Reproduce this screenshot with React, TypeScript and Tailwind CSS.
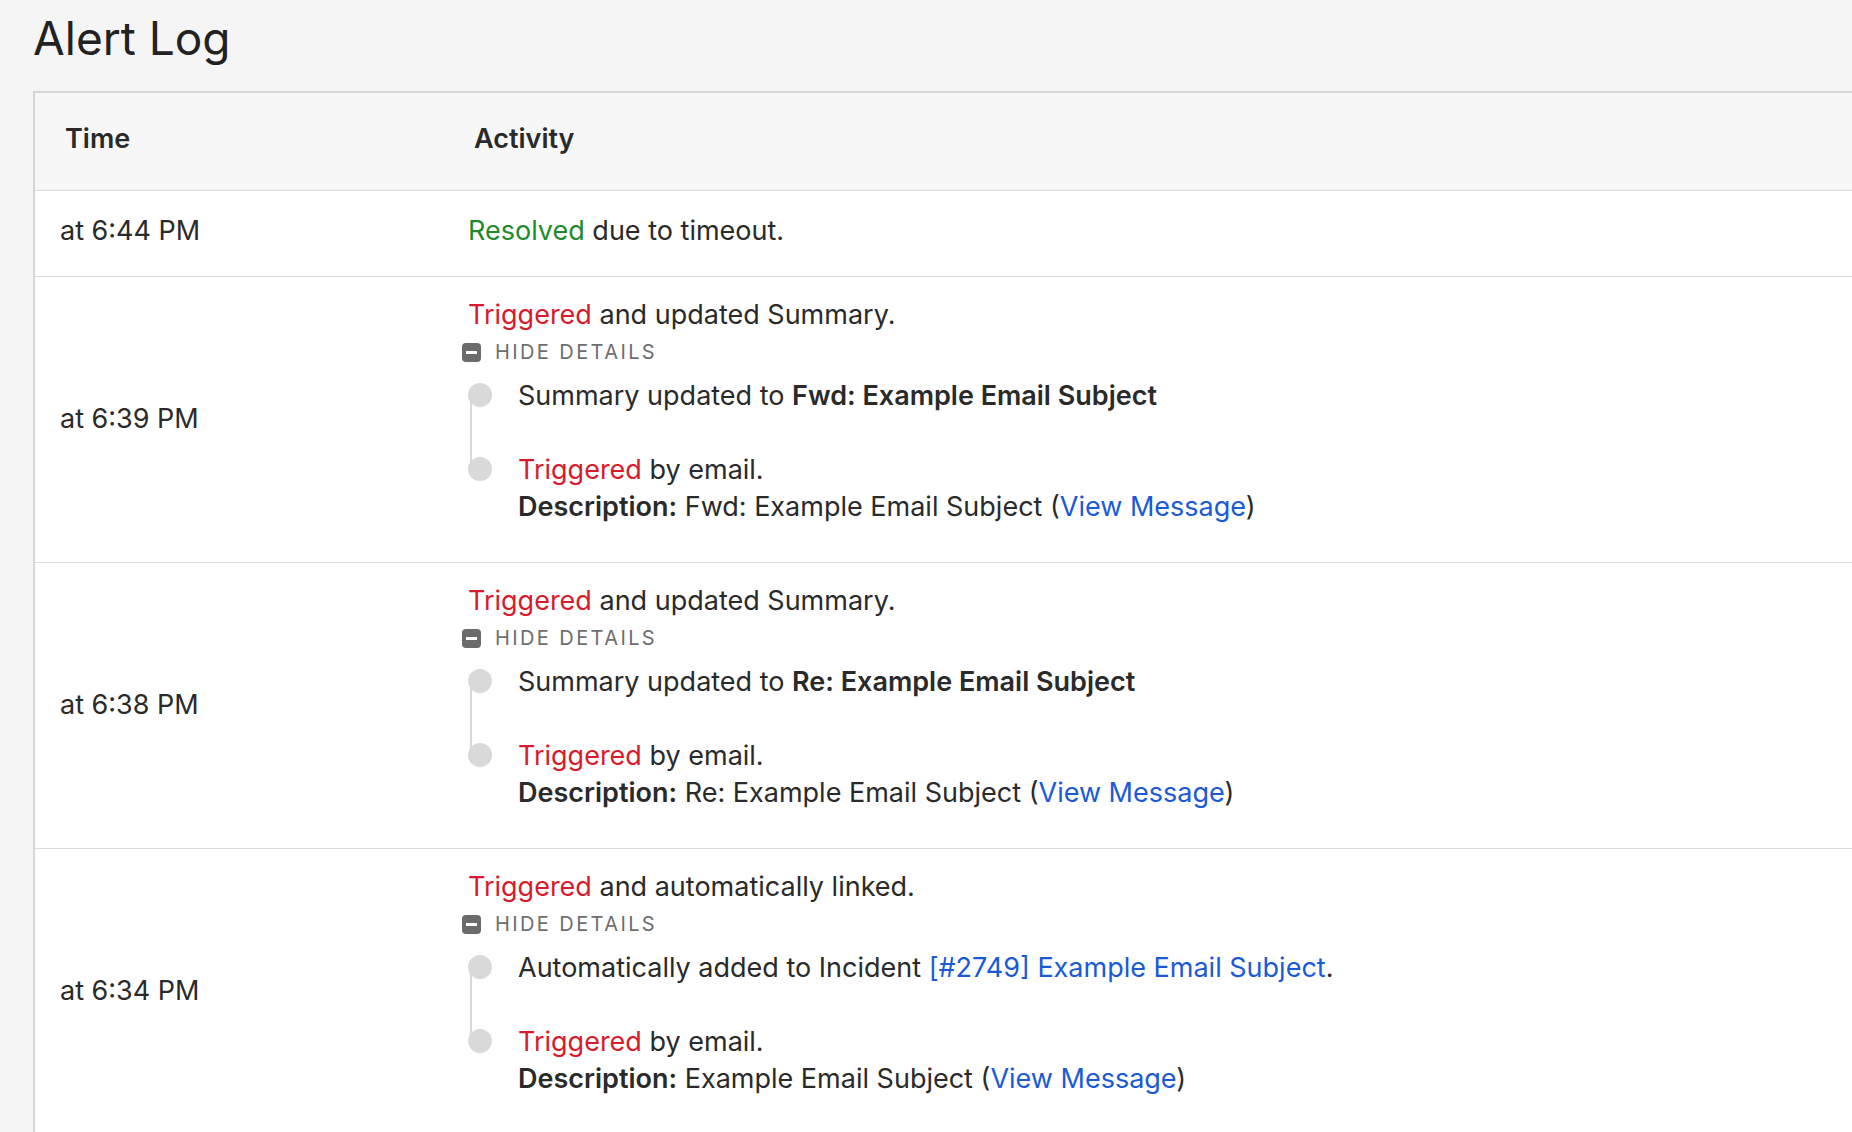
import React from 'react';

const red = 'text-[#d71b2c]';
const blue = 'text-[#1a5ad7]';

function HideDetails() {
  return (
    <div className="flex items-center h-[38px] -ml-[6px] gap-[14px]">
      <span className="w-[19px] h-[19px] rounded-[4px] bg-[#6b6b6b] flex items-center justify-center">
        <span className="w-[11px] h-[3px] bg-white" />
      </span>
      <span className="text-[20px] tracking-[0.12em] text-[#6e6e6e]">HIDE DETAILS</span>
    </div>
  );
}

function Timeline({ first, second }: { first: React.ReactNode; second: React.ReactNode }) {
  return (
    <div className="relative mt-[6px] pl-[50px]">
      <div className="absolute left-[1px] top-[18px] w-[2px] h-[76px] bg-[#d9d9d9] ml-[1px]" />
      <div className="relative leading-[37px]">
        <span className="absolute -left-[50px] top-[6px] w-[24px] h-[24px] rounded-full bg-[#d9d9d9]" />
        {first}
      </div>
      <div className="relative leading-[37px] mt-[37px]">
        <span className="absolute -left-[50px] top-[6px] w-[24px] h-[24px] rounded-full bg-[#d9d9d9]" />
        {second}
      </div>
    </div>
  );
}

function DetailRow({ time, head, first, desc }: { time: string; head: React.ReactNode; first: React.ReactNode; desc: string }) {
  return (
    <div className="flex border-t border-[#dcdcdc] h-[286px]">
      <div className="w-[439px] pl-[25px] flex items-center">{time}</div>
      <div className="flex-1 pt-[20px] -ml-[6px]">
        <div className="leading-[36px]">{head}</div>
        <HideDetails />
        <Timeline
          first={first}
          second={
            <>
              <div><span className={red}>Triggered</span> by email.</div>
              <div>
                <b className="font-semibold">Description:</b> {desc} (<span className={blue}>View Message</span>)
              </div>
            </>
          }
        />
      </div>
    </div>
  );
}

export default function App() {
  return (
    <div className="min-h-[1132px] bg-[#f5f5f5] text-[#2a2a2a] text-[27px] overflow-hidden" style={{ fontFamily: 'Inter, "Noto Sans", sans-serif' }}>
      <h1 className="pl-[33px] pt-[8px] h-[91px] text-[46px] leading-[60px] text-[#222]">Alert Log</h1>
      <div className="ml-[33px] border-l-2 border-t-2 border-[#d6d6d6] bg-white">
        <div className="flex h-[97px] items-center bg-[#f7f7f7] font-semibold pb-[4px]">
          <div className="w-[439px] pl-[30px]">Time</div>
          <div>Activity</div>
        </div>
        <div className="flex border-t border-[#dcdcdc] h-[86px] items-center pb-[4px]">
          <div className="w-[439px] pl-[25px]">at 6:44 PM</div>
          <div className="-ml-[6px]"><span className="text-[#1d8a2e]">Resolved</span> due to timeout.</div>
        </div>
        <DetailRow
          time="at 6:39 PM"
          head={<><span className={red}>Triggered</span> and updated Summary.</>}
          first={<>Summary updated to <b className="font-semibold">Fwd: Example Email Subject</b></>}
          desc="Fwd: Example Email Subject"
        />
        <DetailRow
          time="at 6:38 PM"
          head={<><span className={red}>Triggered</span> and updated Summary.</>}
          first={<>Summary updated to <b className="font-semibold">Re: Example Email Subject</b></>}
          desc="Re: Example Email Subject"
        />
        <DetailRow
          time="at 6:34 PM"
          head={<><span className={red}>Triggered</span> and automatically linked.</>}
          first={<>Automatically added to Incident <span className={blue}>[#2749] Example Email Subject</span>.</>}
          desc="Example Email Subject"
        />
      </div>
    </div>
  );
}
